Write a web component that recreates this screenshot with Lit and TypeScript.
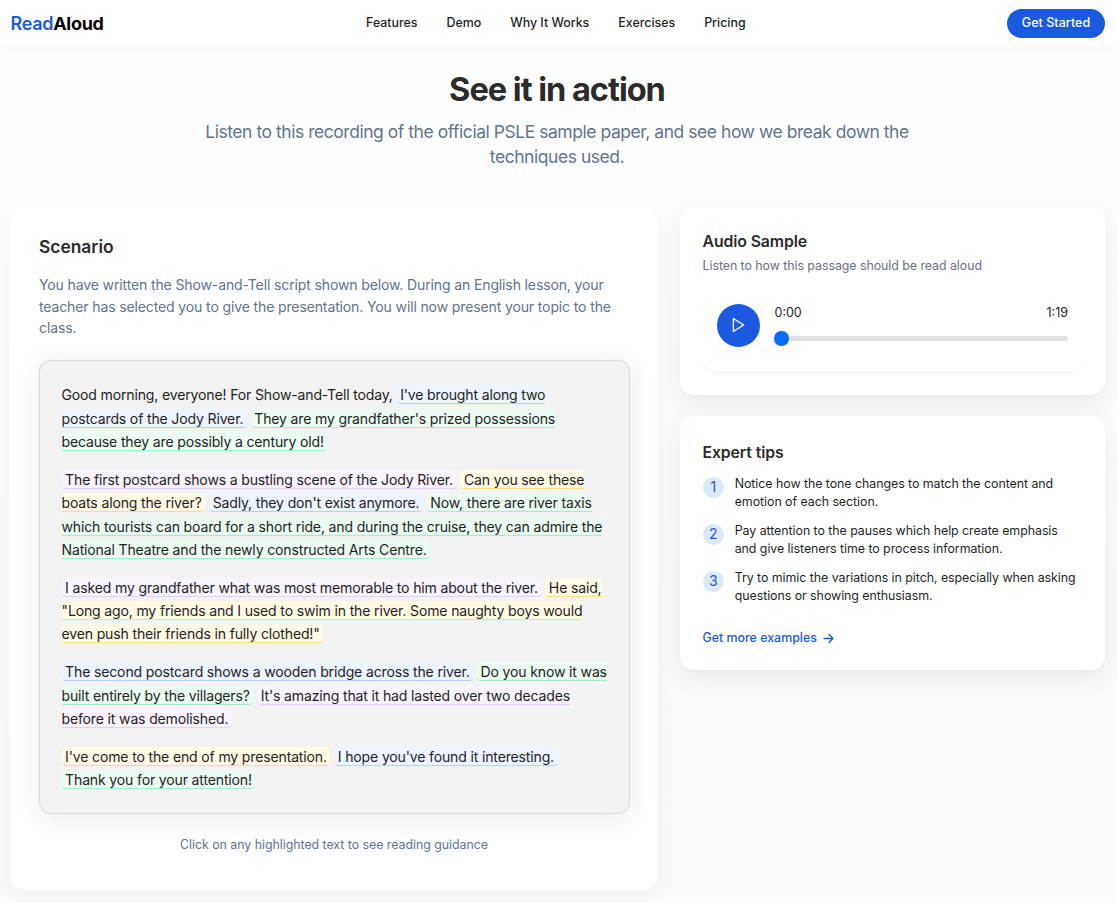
import { LitElement, html, css } from "lit";
import { customElement } from "lit/decorators.js";

type Part = { tone?: string; breakBefore?: boolean; lines: string[] };

const PASSAGE: Part[][] = [
  [
    { lines: ["Good morning, everyone! For Show-and-Tell today,"] },
    { tone: "blue", lines: ["I've brought along two", "postcards of the Jody River."] },
    { tone: "green", lines: ["They are my grandfather's prized possessions", "because they are possibly a century old!"] },
  ],
  [
    { tone: "purple", lines: ["The first postcard shows a bustling scene of the Jody River."] },
    { tone: "amber", lines: ["Can you see these", "boats along the river?"] },
    { tone: "blue", lines: ["Sadly, they don't exist anymore."] },
    { tone: "green", lines: ["Now, there are river taxis", "which tourists can board for a short ride, and during the cruise, they can admire the", "National Theatre and the newly constructed Arts Centre."] },
  ],
  [
    { tone: "purple", lines: ["I asked my grandfather what was most memorable to him about the river."] },
    { tone: "amber", lines: ["He said,", "\"Long ago, my friends and I used to swim in the river. Some naughty boys would", "even push their friends in fully clothed!\""] },
  ],
  [
    { tone: "blue", lines: ["The second postcard shows a wooden bridge across the river."] },
    { tone: "green", lines: ["Do you know it was", "built entirely by the villagers?"] },
    { tone: "purple", lines: ["It's amazing that it had lasted over two decades", "before it was demolished."] },
  ],
  [
    { tone: "amber", lines: ["I've come to the end of my presentation."] },
    { tone: "blue", lines: ["I hope you've found it interesting."] },
    { tone: "green", breakBefore: true, lines: ["Thank you for your attention!"] },
  ],
];

const TIPS = [
  ["Notice how the tone changes to match the content and", "emotion of each section."],
  ["Pay attention to the pauses which help create emphasis", "and give listeners time to process information."],
  ["Try to mimic the variations in pitch, especially when asking", "questions or showing enthusiasm."],
];

@customElement("app-root")
export class AppRoot extends LitElement {
  static styles = css`
    :host { display: block; height: 903px; overflow: hidden; font-family: Inter, sans-serif; color: #1f1f1f; font-size: 14px; background: linear-gradient(#ffffff, #fefefe 20%, #f8fafd); }
    * { box-sizing: border-box; margin: 0; padding: 0; }
    button { font: inherit; border: 0; }
    header { height: 47px; background: #fff; box-shadow: 0 1px 12px rgba(0,0,0,.05); display: flex; justify-content: space-between; align-items: center; padding: 0 12px 0 10.5px; }
    .logo { font-size: 18px; font-weight: 700; color: #000; letter-spacing: -.3px; }
    .logo b { color: #1d5adc; font-weight: 600; }
    nav { display: flex; gap: 29px; font-size: 12.4px; font-weight: 500; padding: 0 0 2px 1px; }
    .cta { width: 98px; height: 29px; border-radius: 15px; background: #1a59e0; color: #fff; font-size: 12.5px; font-weight: 500; letter-spacing: .04px; padding-bottom: 2px; }
    .hero { text-align: center; padding: 22px 3px 0 0; }
    h1 { font-size: 32.6px; line-height: 40px; font-weight: 700; color: #2b2b2b; letter-spacing: -1.03px; }
    .sub { font-size: 17.5px; line-height: 25.4px; color: #64748b; margin-top: 10px; letter-spacing: -.46px; }
    .grid { display: grid; grid-template-columns: 648.5px 425px; gap: 22px; margin: 36px 0 0 9.5px; align-items: start; }
    .card { background: #fff; border-radius: 14.5px; }
    .left { height: 684px; padding: 29px 29px 29px 29.5px; box-shadow: 0 4px 22px rgba(0,0,0,.04); }
    h2 { font-size: 17.4px; line-height: 24px; font-weight: 600; color: #2b2b2b; }
    .intro { font-size: 14.05px; line-height: 21.7px; color: #64748b; margin-top: 15px; letter-spacing: -.145px; white-space: nowrap; }
    .box { width: 591px; margin-top: 21px; height: 454px; background: #f2f2f2; border: 1px solid #dadada; border-radius: 11px; padding: 22px 22px 22px 21.5px; box-shadow: 0 4px 26px rgba(0,0,0,.09); font-size: 14.05px; line-height: 23.3px; letter-spacing: -.16px; white-space: nowrap; }
    .box p + p { margin-top: 14.7px; }
    mark { color: inherit; background: #edf4fd; border-bottom: 1px solid #b3d2f9; padding: .5px 3.6px; border-radius: 4px; }
    .green { background: #ebfbf2; border-color: #a7ecca; }
    .amber { background: #fffae5; border-color: #fddc80; }
    .purple { background: #f8f3fd; border-color: #e3cef9; }
    .hint { text-align: center; margin-top: 22px; font-size: 12.4px; line-height: 18px; letter-spacing: -.045px; color: #64748b; }
    .side { display: grid; grid-template-columns: 425px; gap: 21.5px; }
    .side .card { padding: 24px 22.5px 0; box-shadow: 0 8px 26px rgba(0,0,0,.09); }
    .audio { height: 189px; }
    .tips { height: 253.5px; }
    h3 { font-size: 15.8px; line-height: 24px; font-weight: 600; color: #2b2b2b; letter-spacing: -.1px; }
    .tips h3 { padding-top: 1px; }
    .cap { font-size: 12.4px; line-height: 18px; color: #6b7280; margin-top: 3px; letter-spacing: -.055px; }
    .player { margin-top: 14.5px; height: 83px; border-radius: 14px; box-shadow: 0 1.5px 1px -.5px rgba(0,0,0,.05); display: flex; gap: 14.5px; padding: 14.5px; }
    .play { width: 43px; height: 43px; border-radius: 50%; background: #1a59e0; display: grid; place-items: center; }
    .track { flex: 1; }
    .times { display: flex; justify-content: space-between; font-size: 12.5px; line-height: 18px; }
    .bar { height: 5px; border-radius: 3px; background: #e0e0e0; margin-top: 14px; display: flex; align-items: center; }
    .thumb { width: 14.5px; height: 14.5px; margin-left: -.5px; border-radius: 50%; background: #0a6cff; }
    ol { list-style: none; display: grid; gap: 11px; margin-top: 10px; }
    li { display: flex; gap: 10.5px; font-size: 12.4px; line-height: 18px; letter-spacing: -.05px; white-space: nowrap; }
    .num { width: 21.7px; height: 21.7px; margin-top: 1.3px; border-radius: 50%; background: #dbe9fb; color: #1d5adc; font-size: 14px; display: grid; place-items: center; }
    .more { display: flex; align-items: center; gap: 6px; margin-top: 24px; font-size: 12.4px; font-weight: 500; line-height: 18px; color: #1d5adc; }
  `;

  part(p: Part) {
    const body = p.lines.map((l, i) => html`${i ? html`<br>` : ""}${l}`);
    return html`${p.breakBefore ? html`<br>` : ""}${p.tone ? html`<mark class=${p.tone}>${body}</mark>` : body} `;
  }

  render() {
    return html`
      <header>
        <div class="logo"><b>Read</b>Aloud</div>
        <nav>${["Features", "Demo", "Why It Works", "Exercises", "Pricing"].map((n) => html`<a>${n}</a>`)}</nav>
        <button class="cta">Get Started</button>
      </header>
      <section class="hero">
        <h1>See it in action</h1>
        <p class="sub">Listen to this recording of the official PSLE sample paper, and see how we break down the<br>techniques used.</p>
      </section>
      <main class="grid">
        <section class="card left">
          <h2>Scenario</h2>
          <p class="intro">You have written the Show-and-Tell script shown below. During an English lesson, your<br>teacher has selected you to give the presentation. You will now present your topic to the<br>class.</p>
          <div class="box">${PASSAGE.map((p) => html`<p>${p.map((x) => this.part(x))}</p>`)}</div>
          <p class="hint">Click on any highlighted text to see reading guidance</p>
        </section>
        <div class="side">
          <section class="card audio">
            <h3>Audio Sample</h3>
            <p class="cap">Listen to how this passage should be read aloud</p>
            <div class="player">
              <button class="play" aria-label="Play"><svg width="14" height="16" viewBox="0 0 14 16" fill="none" stroke="#fff" stroke-width="1.4" stroke-linejoin="round"><path d="M1.4 1.5 11.6 8 1.4 14.5Z"/></svg></button>
              <div class="track"><div class="times"><span>0:00</span><span>1:19</span></div><div class="bar"><div class="thumb"></div></div></div>
            </div>
          </section>
          <section class="card tips">
            <h3>Expert tips</h3>
            <ol>${TIPS.map((t, i) => html`<li><span class="num">${i + 1}</span><div>${t[0]}<br>${t[1]}</div></li>`)}</ol>
            <a class="more">Get more examples<svg width="11" height="11" viewBox="0 0 11 11" fill="none" stroke="#1d5adc" stroke-width="1.3" stroke-linecap="round" stroke-linejoin="round"><path d="M1 5.5h9M6 1.5l4 4-4 4"/></svg></a>
          </section>
        </div>
      </main>`;
  }
}
